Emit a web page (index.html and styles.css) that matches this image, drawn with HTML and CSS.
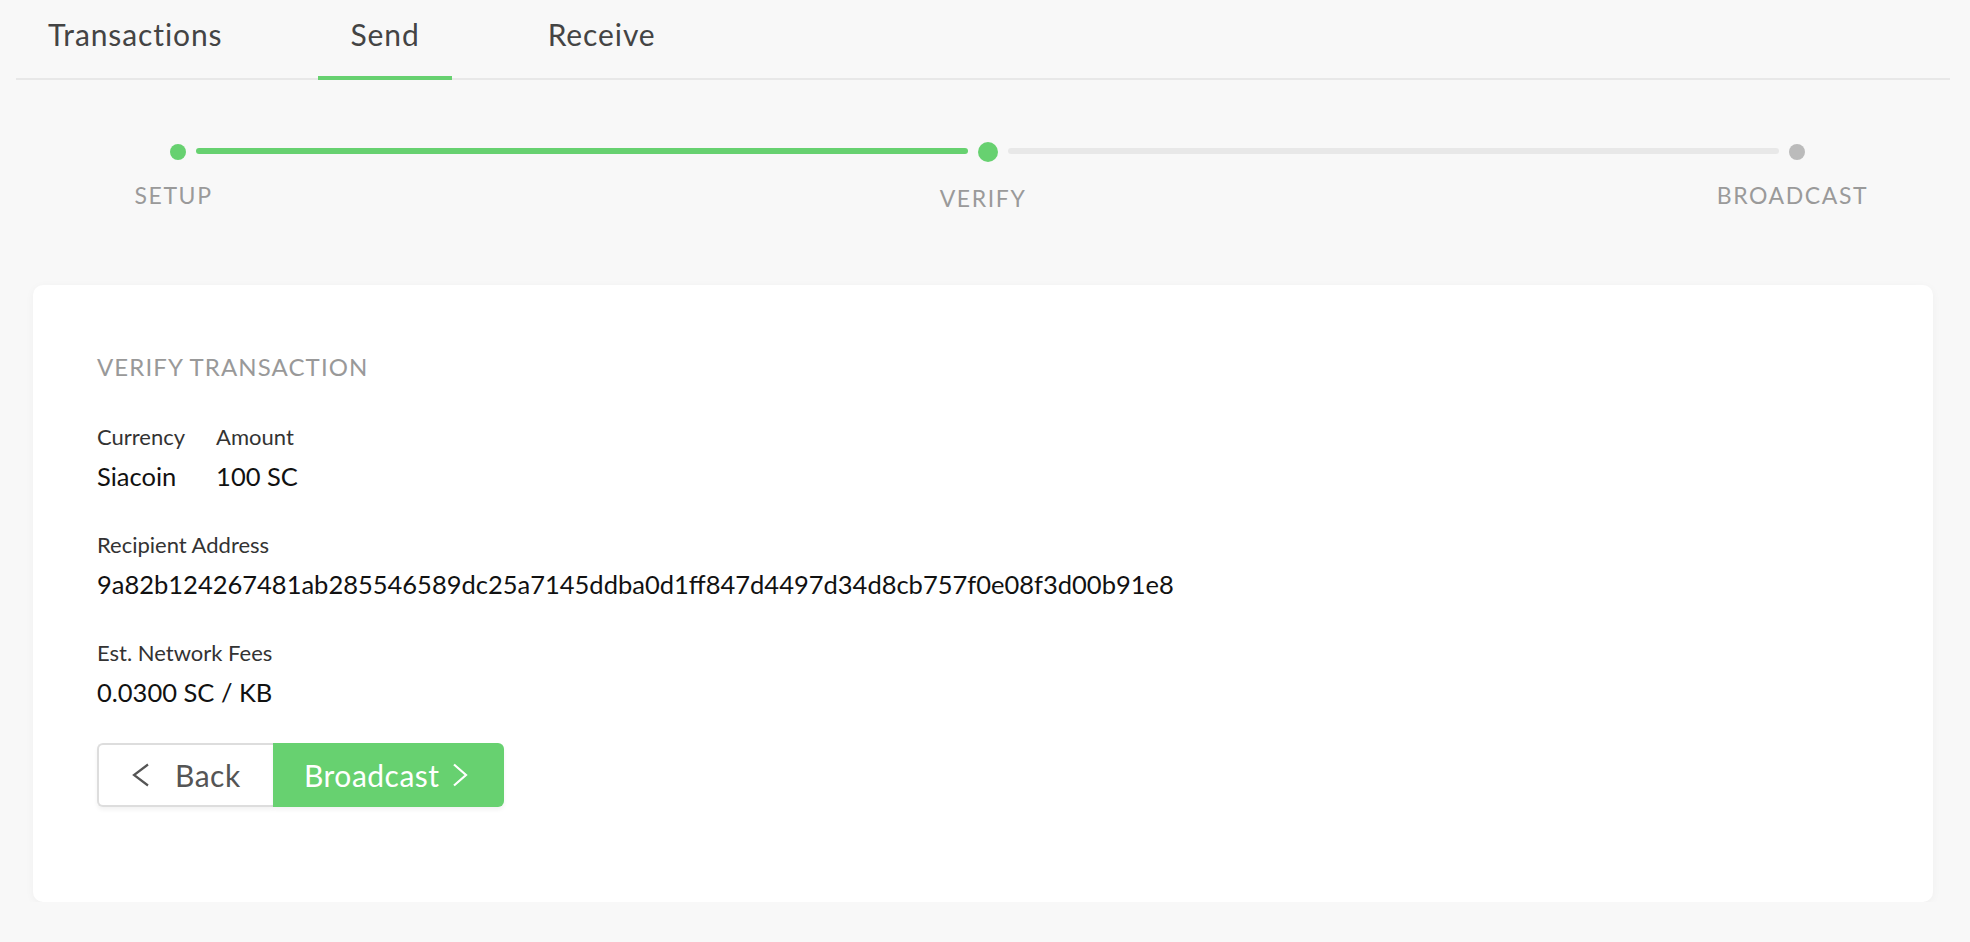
FILE: index.html
```html
<!DOCTYPE html>
<html lang="en">
  <head>
    <meta charset="UTF-8" />
    <meta name="viewport" content="width=device-width, initial-scale=1.0" />
    <title>Wallet - Send</title>
    <link rel="stylesheet" href="styles.css">
  </head>
  <body>
    <nav class="tabs">
      <a class="tab">Transactions</a>
      <a class="tab active">Send</a>
      <a class="tab">Receive</a>
    </nav>

    <div class="stepper">
      <div class="step done">
        <span class="dot"></span>
        <span class="step-label">SETUP</span>
      </div>
      <div class="step-line done"></div>
      <div class="step current">
        <span class="dot"></span>
        <span class="step-label">VERIFY</span>
      </div>
      <div class="step-line"></div>
      <div class="step">
        <span class="dot"></span>
        <span class="step-label">BROADCAST</span>
      </div>
    </div>

    <div class="card">
      <h2 class="card-title">VERIFY TRANSACTION</h2>

      <div class="field-row">
        <div class="field">
          <p class="field-label">Currency</p>
          <p class="field-value">Siacoin</p>
        </div>
        <div class="field">
          <p class="field-label">Amount</p>
          <p class="field-value">100 SC</p>
        </div>
      </div>

      <div class="field">
        <p class="field-label">Recipient Address</p>
        <p class="field-value">9a82b124267481ab285546589dc25a7145ddba0d1ff847d4497d34d8cb757f0e08f3d00b91e8</p>
      </div>

      <div class="field">
        <p class="field-label">Est. Network Fees</p>
        <p class="field-value">0.0300 SC / KB</p>
      </div>

      <div class="btn-group">
        <button class="btn btn-back" type="button">
          <svg width="20" height="24" viewBox="0 0 20 24"><polyline points="17,1.5 3,12 17,22.5" fill="none" stroke="#555" stroke-width="2.2" /></svg>
          Back
        </button>
        <button class="btn btn-primary" type="button">
          Broadcast
          <svg width="18" height="24" viewBox="0 0 18 24"><polyline points="3,1.5 15,12 3,22.5" fill="none" stroke="#fff" stroke-width="2.2" /></svg>
        </button>
      </div>
    </div>
  </body>
</html>
```

FILE: styles.css
```css
* {
  margin: 0;
  padding: 0;
  box-sizing: border-box;
}

body {
  background: #f8f8f8;
  font-family: Lato, "Open Sans", sans-serif;
  color: #111;
}

.tabs {
  display: flex;
  gap: 64px;
  margin: 0 20px 0 16px;
  border-bottom: 2px solid #e8e8e8;
}

.tab {
  padding: 16px 32px 24px;
  margin-bottom: -2px;
  font-size: 30px;
  line-height: 36px;
  letter-spacing: 0.9px;
  color: #444;
  border-bottom: 4px solid transparent;
}

.tab.active {
  border-bottom-color: #67d170;
}

.stepper {
  display: flex;
  align-items: flex-start;
  margin: 62px 165px 0 170px;
}

.step {
  width: 16px;
  margin-top: 2px;
  display: flex;
  flex-direction: column;
  align-items: center;
}

.step .dot {
  width: 16px;
  height: 16px;
  border-radius: 50%;
  background: #bbb;
}

.step.done .dot,
.step.current .dot {
  background: #67d170;
}

.step.current {
  width: 20px;
  margin-top: 0;
}

.step.current .dot {
  width: 20px;
  height: 20px;
}

.step-label {
  margin: 22px 9px 0 0;
  font-size: 23px;
  line-height: 26px;
  letter-spacing: 1.6px;
  color: #9a9a9a;
  white-space: nowrap;
}

.step.current .step-label {
  margin-top: 23px;
}

.step-line {
  flex: 1;
  height: 6px;
  margin: 6px 10px 0;
  border-radius: 3px;
  background: #e8e8e8;
}

.step-line.done {
  background: #67d170;
}

.card {
  margin: 74px 37px 0 33px;
  padding: 67px 64px 95px;
  background: #fff;
  border-radius: 10px;
  box-shadow: 0 2px 10px rgba(0, 0, 0, 0.04);
}

.card-title {
  font-size: 24px;
  line-height: 30px;
  font-weight: normal;
  letter-spacing: 1.1px;
  color: #999;
  margin-bottom: 41px;
}

.field-row {
  display: flex;
  gap: 31px;
}

.field {
  margin-bottom: 39px;
}

.field-label {
  font-size: 22px;
  line-height: 28px;
  color: #333;
  margin-bottom: 9px;
}

.field-value {
  font-size: 25.5px;
  line-height: 32px;
  color: #111;
}

.btn-group {
  display: flex;
  margin-top: -4px;
}

.btn {
  display: flex;
  align-items: center;
  height: 64px;
  font-family: inherit;
  font-size: 30px;
  letter-spacing: 0.5px;
  border: none;
  box-shadow: 0 3px 4px rgba(0, 0, 0, 0.05);
}

.btn-back {
  width: 176px;
  padding: 0 0 0 32px;
  gap: 24px;
  color: #555;
  background: #fff;
  border: 2px solid #ddd;
  border-right: none;
  border-radius: 6px 0 0 6px;
}

.btn-primary {
  width: 231px;
  padding: 0 0 0 31px;
  gap: 11px;
  color: #fff;
  background: #67d170;
  border-radius: 0 6px 6px 0;
}
```
